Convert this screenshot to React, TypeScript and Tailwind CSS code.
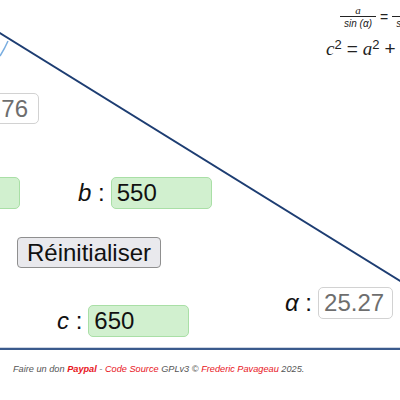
import React from "react";

const sans = { fontFamily: '"Liberation Sans", Arial, sans-serif' };

function Field({
  value,
  green,
  className,
}: {
  value: string;
  green?: boolean;
  className: string;
}) {
  return (
    <div
      className={
        "h-8 rounded-[5px] border pl-[5px] flex items-center text-[24px] leading-none " +
        (green
          ? "bg-[#d1f0cf] border-[#a9dfa6] text-[#111]"
          : "bg-white border-[#d2d2d2] text-[#6e6e6e]") +
        " " +
        className
      }
      style={sans}
    >
      {value}
    </div>
  );
}

function Label({ name }: { name: string }) {
  return (
    <span className="text-[24px] text-[#111] leading-none whitespace-pre" style={sans}>
      <i>{name}</i> :
    </span>
  );
}

export default function App() {
  return (
    <div className="w-[400px] h-[400px] bg-white overflow-hidden">
      <div className="relative w-[400px] h-[350px] overflow-hidden">
        <svg className="absolute inset-0" width="400" height="350" viewBox="0 0 400 350">
          <path d="M 0 56 Q 5 48 8 41" fill="none" stroke="#7aaee0" strokeWidth="1.5" />
          <line x1="-10" y1="27" x2="460" y2="318" stroke="#1d3d72" strokeWidth="2" />
          <line x1="0" y1="349" x2="400" y2="349" stroke="#3a5a8c" strokeWidth="2.5" />
        </svg>

        {/* formulas */}
        <div className="absolute left-[340px] top-[4px] flex items-center text-[#222] whitespace-nowrap">
          <div className="flex flex-col items-center w-[36px]">
            <span className="italic text-[11px] leading-[12px]" style={{ fontFamily: '"Liberation Serif", serif' }}>
              a
            </span>
            <span className="w-full border-t border-[#222]" />
            <span className="italic text-[10px] leading-[13px]" style={sans}>
              sin (α)
            </span>
          </div>
          <span className="mx-[4px] text-[14px]" style={sans}>=</span>
          <div className="flex flex-col items-center w-[36px]">
            <span className="italic text-[11px] leading-[12px]" style={{ fontFamily: '"Liberation Serif", serif' }}>
              b
            </span>
            <span className="w-full border-t border-[#222]" />
            <span className="italic text-[10px] leading-[13px]" style={sans}>
              sin (β)
            </span>
          </div>
        </div>
        <div
          className="absolute left-[326px] top-[35px] text-[19px] text-[#222] whitespace-nowrap"
          style={{ fontFamily: '"Liberation Serif", serif' }}
        >
          <i>c</i>
          <sup className="text-[13px]" style={sans}>2</sup>
          <span className="mx-[5px]" style={sans}>=</span>
          <i>a</i>
          <sup className="text-[13px]" style={sans}>2</sup>
          <span className="mx-[5px]" style={sans}>+</span>
          <i>b</i>
          <sup className="text-[13px]" style={sans}>2</sup>
        </div>

        {/* gamma */}
        <Field value="97.76" className="absolute left-[-38px] top-[93px] w-[77px] !h-[31px]" />

        {/* a (label off to the left) */}
        <Field value="280" green className="absolute left-[-81px] top-[177px] w-[101px]" />

        {/* b */}
        <div className="absolute left-[78px] top-[177px] flex items-center gap-[6px]">
          <Label name="b" />
          <Field value="550" green className="w-[101px]" />
        </div>

        <button
          className="absolute left-[17px] top-[237px] h-[31px] w-[144px] rounded-[4px] border border-[#8f8f8f] bg-[#e9e9ed] text-[24px] leading-none text-[#111]"
          style={sans}
        >
          Réinitialiser
        </button>

        {/* alpha */}
        <div className="absolute left-[285px] top-[287px] flex items-center gap-[6px]">
          <Label name="α" />
          <Field value="25.27" className="w-[75px]" />
        </div>

        {/* c */}
        <div className="absolute left-[57px] top-[305px] flex items-center gap-[6px]">
          <Label name="c" />
          <Field value="650" green className="w-[101px]" />
        </div>
      </div>

      <p className="pl-[13px] pt-[13px] text-[9.2px] italic text-[#555]" style={sans}>
        Faire un don <b className="text-[#e8141c]">Paypal</b> -{" "}
        <span className="text-[#e8141c]">Code Source</span> GPLv3 ©{" "}
        <span className="text-[#e8141c]">Frederic Pavageau</span> 2025.
      </p>
    </div>
  );
}
